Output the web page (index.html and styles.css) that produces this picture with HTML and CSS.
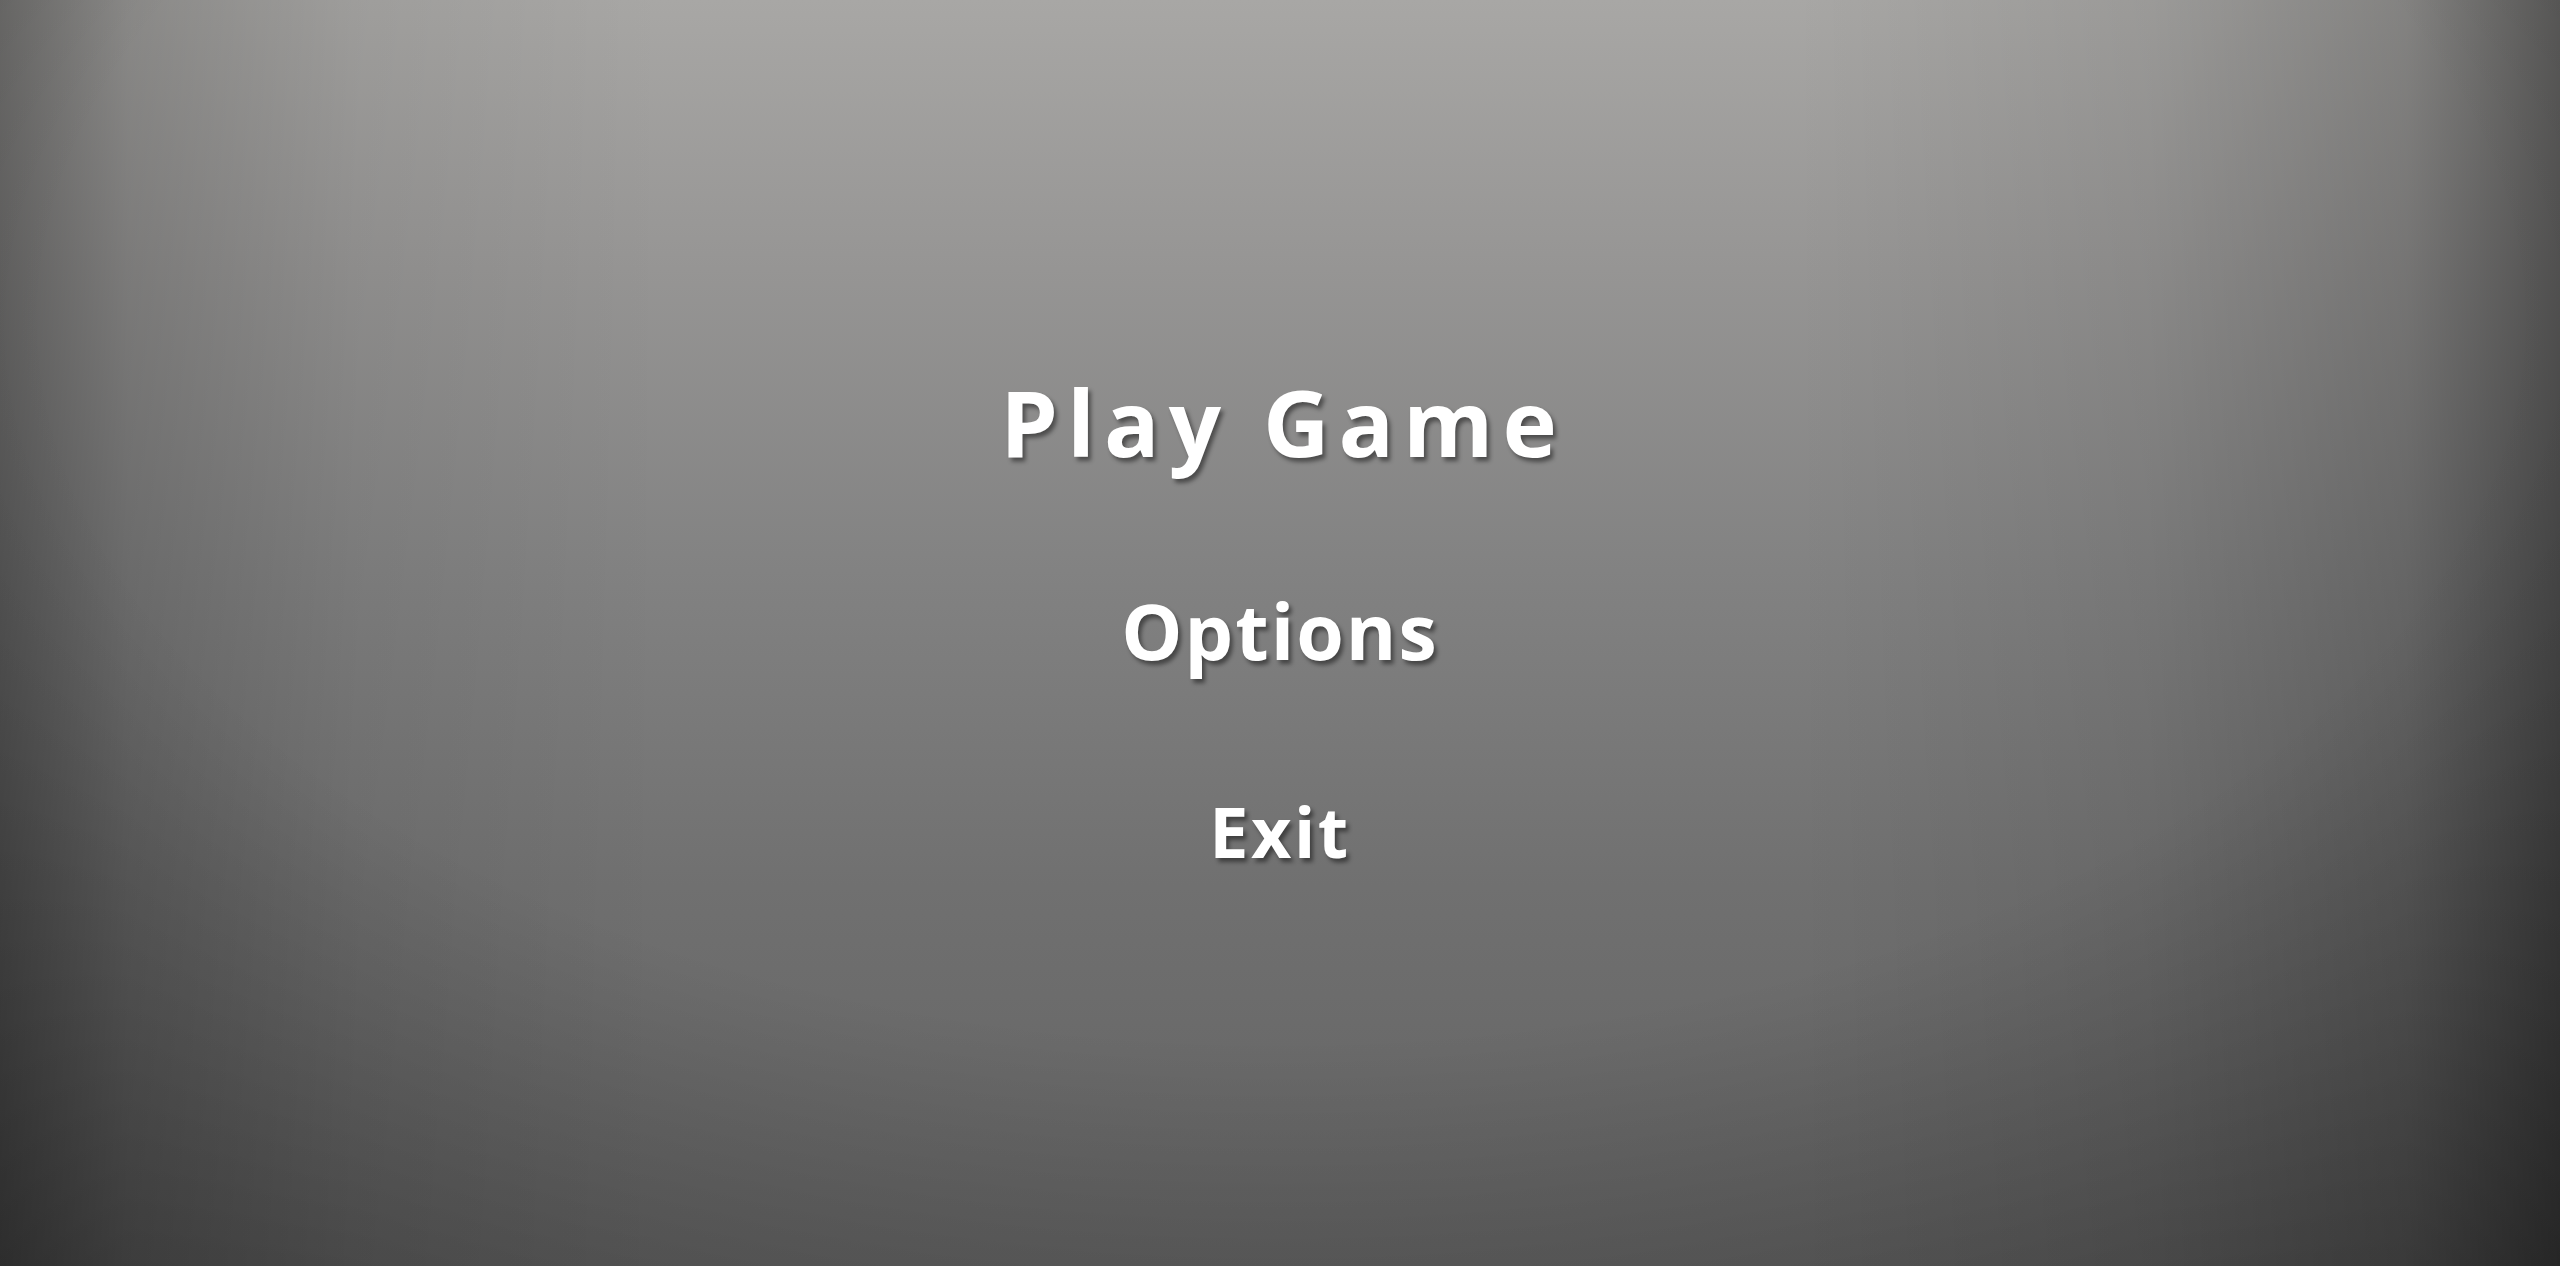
FILE: index.html
```html
<!DOCTYPE html>
<html lang="en">
<head>
<meta charset="utf-8">
<title>Main Menu</title>
<link rel="stylesheet" href="styles.css">
</head>
<body>
<main class="screen">
  <nav class="menu">
    <a class="menu-item menu-item--play" href="#">Play Game</a>
    <a class="menu-item menu-item--options" href="#">Options</a>
    <a class="menu-item menu-item--exit" href="#">Exit</a>
  </nav>
</main>
</body>
</html>
```
FILE: styles.css
```css
html, body {
  margin: 0;
  padding: 0;
  height: 100%;
}
body {
  background: #6f6f6f;
  overflow: hidden;
}
.screen {
  width: 100%;
  height: 100vh;
  background:
    radial-gradient(ellipse 80% 95% at 50% 25%, rgba(0,0,0,0) 60%, rgba(0,0,0,0.28) 100%),
    linear-gradient(to right, rgba(0,0,0,0.36) 0%, rgba(0,0,0,0.18) 5%, rgba(0,0,0,0.06) 14%, rgba(0,0,0,0) 26%, rgba(0,0,0,0) 70%, rgba(0,0,0,0.08) 84%, rgba(0,0,0,0.22) 94%, rgba(0,0,0,0.46) 100%),
    linear-gradient(to bottom, #a8a7a5 0%, #979695 20%, #828282 45%, #707070 70%, #626262 100%);
}
.menu {
  display: flex;
  flex-direction: column;
  align-items: center;
  padding-top: 376px;
}
.menu-item {
  font-family: "Open Sans", Roboto, "Liberation Sans", sans-serif;
  font-weight: 700;
  color: #ffffff;
  text-decoration: none;
  line-height: 1;
  text-shadow: 3px 4px 4px rgba(0, 0, 0, 0.45);
}
.menu-item--play {
  font-size: 92px;
  letter-spacing: 9px;
  padding-left: 6px;
}
.menu-item--options {
  font-size: 77px;
  letter-spacing: 2px;
  margin-top: 124px;
}
.menu-item--exit {
  font-size: 70px;
  letter-spacing: 2.5px;
  margin-top: 127px;
}
```
